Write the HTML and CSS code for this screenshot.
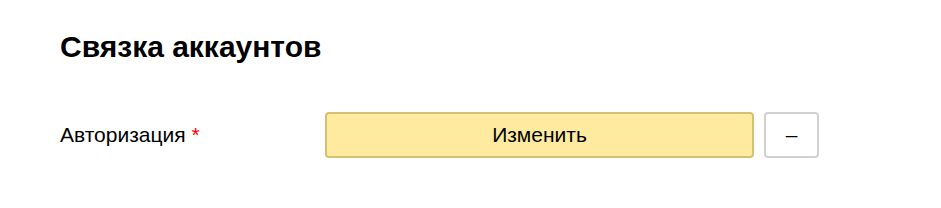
FILE: index.html
```html
<!DOCTYPE html>
<html lang="ru">
<head>
    <meta charset="UTF-8">
    <title>Связка аккаунтов</title>
    <link rel="stylesheet" href="styles.css">
</head>
<body>
    <div class="section">
        <h2 class="section-title">Связка аккаунтов</h2>
        <div class="field">
            <label class="field-label">Авторизация <span class="required">*</span></label>
            <div class="field-controls">
                <button class="btn btn-action">Изменить</button>
                <button class="btn btn-remove">–</button>
            </div>
        </div>
    </div>
</body>
</html>
```

FILE: styles.css
```css
body {
    margin: 0;
    font-family: Arial, "Liberation Sans", sans-serif;
    color: #000;
    background: #fff;
}
.section {
    padding: 28px 60px;
}
.section-title {
    margin: 0;
    font-size: 30px;
    font-weight: bold;
    line-height: 38px;
}
.field {
    display: flex;
    align-items: center;
    margin-top: 46px;
}
.field-label {
    width: 265px;
    font-size: 21px;
}
.required {
    color: #f00;
}
.field-controls {
    display: flex;
    gap: 10px;
}
.btn {
    height: 46px;
    border-radius: 4px;
    font-family: inherit;
    font-size: 21px;
    color: #000;
    cursor: pointer;
}
.btn-action {
    width: 429px;
    background: #ffeba0;
    border: 2px solid #d6c172;
}
.btn-remove {
    width: 55px;
    background: #fff;
    border: 2px solid #d0d0d0;
}
```
